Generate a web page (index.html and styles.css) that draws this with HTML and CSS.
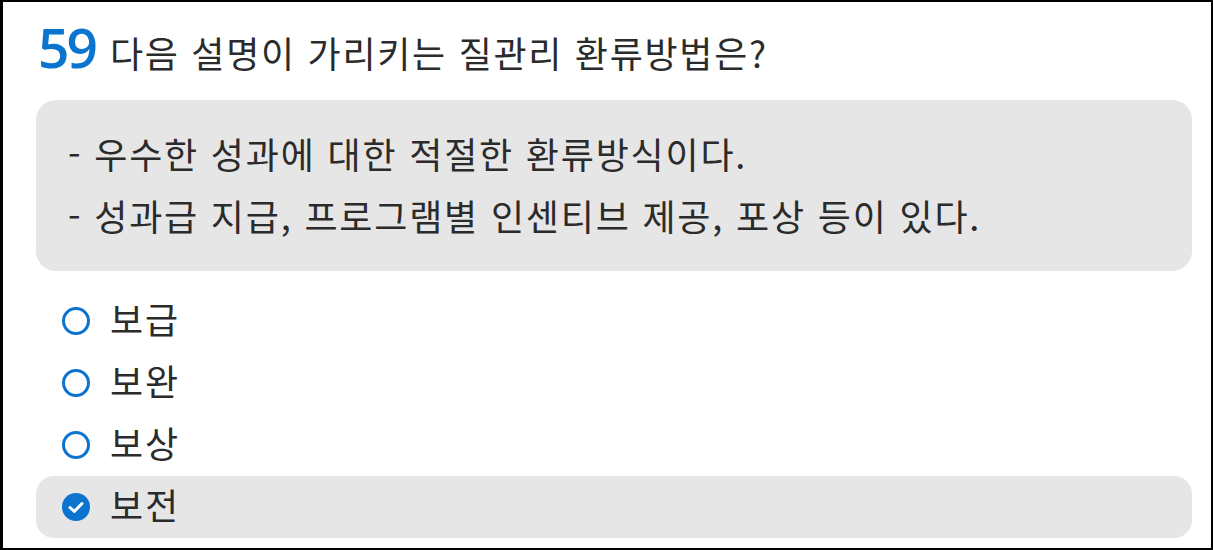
FILE: index.html
```html
<!DOCTYPE html>
<html lang="ko">
<head>
<meta charset="utf-8">
<link rel="stylesheet" href="styles.css">
</head>
<body>
<div class="card">
  <div class="title">
    <span class="num">59</span>
    <span class="q">다음 설명이 가리키는 질관리 환류방법은?</span>
  </div>
  <div class="passage">
    <p>- 우수한 성과에 대한 적절한 환류방식이다.</p>
    <p>- 성과급 지급, 프로그램별 인센티브 제공, 포상 등이 있다.</p>
  </div>
  <ul class="options">
    <li class="opt">
      <svg class="radio" viewBox="0 0 28 28"><circle cx="14" cy="14" r="12.5" fill="none" stroke="#0b74cf" stroke-width="3"/></svg>
      <span class="label">보급</span>
    </li>
    <li class="opt">
      <svg class="radio" viewBox="0 0 28 28"><circle cx="14" cy="14" r="12.5" fill="none" stroke="#0b74cf" stroke-width="3"/></svg>
      <span class="label">보완</span>
    </li>
    <li class="opt">
      <svg class="radio" viewBox="0 0 28 28"><circle cx="14" cy="14" r="12.5" fill="none" stroke="#0b74cf" stroke-width="3"/></svg>
      <span class="label">보상</span>
    </li>
    <li class="opt selected">
      <svg class="radio" viewBox="0 0 28 28"><circle cx="14" cy="14" r="14" fill="#0b74cf"/><path d="M8 14.5 L12.3 18.5 L20 10.5" fill="none" stroke="#fff" stroke-width="3" stroke-linecap="round" stroke-linejoin="round"/></svg>
      <span class="label">보전</span>
    </li>
  </ul>
</div>
</body>
</html>
```

FILE: styles.css
```css
* { box-sizing: border-box; }
html, body { margin: 0; padding: 0; background: #fff; }
.card {
  width: 1213px;
  height: 550px;
  border: 2px solid #000;
  border-left-width: 3px;
  padding: 0 19px 0 33px;
  font-family: "Noto Sans CJK KR", "Noto Sans", sans-serif;
  color: #2b2b2b;
  overflow: hidden;
}
.title {
  display: flex;
  align-items: baseline;
  height: 80px;
  padding-top: 14px;
  line-height: 62px;
}
.num {
  font-family: "Open Sans", sans-serif;
  font-weight: 600;
  font-size: 55px;
  letter-spacing: -3px;
  color: #0b74cf;
  margin-left: 2px;
  margin-right: 15px;
}
.q {
  font-size: 36px;
  letter-spacing: 1.7px;
}
.passage {
  margin-top: 18px;
  background: #e6e6e6;
  border-radius: 20px;
  padding: 22px 0 25px 32px;
  font-size: 36px;
  line-height: 62px;
  letter-spacing: 1.8px;
}
.passage p { margin: 0; }
.options {
  list-style: none;
  margin: 19px 0 0 0;
  padding: 0;
}
.opt {
  display: flex;
  align-items: center;
  height: 62px;
  padding-left: 26px;
  font-size: 36px;
  letter-spacing: 1.8px;
  border-radius: 18px;
}
.opt.selected { background: #e6e6e6; }
.label { padding-bottom: 6px; }
.radio {
  width: 28px;
  height: 28px;
  margin-right: 20px;
  flex: none;
}
```
